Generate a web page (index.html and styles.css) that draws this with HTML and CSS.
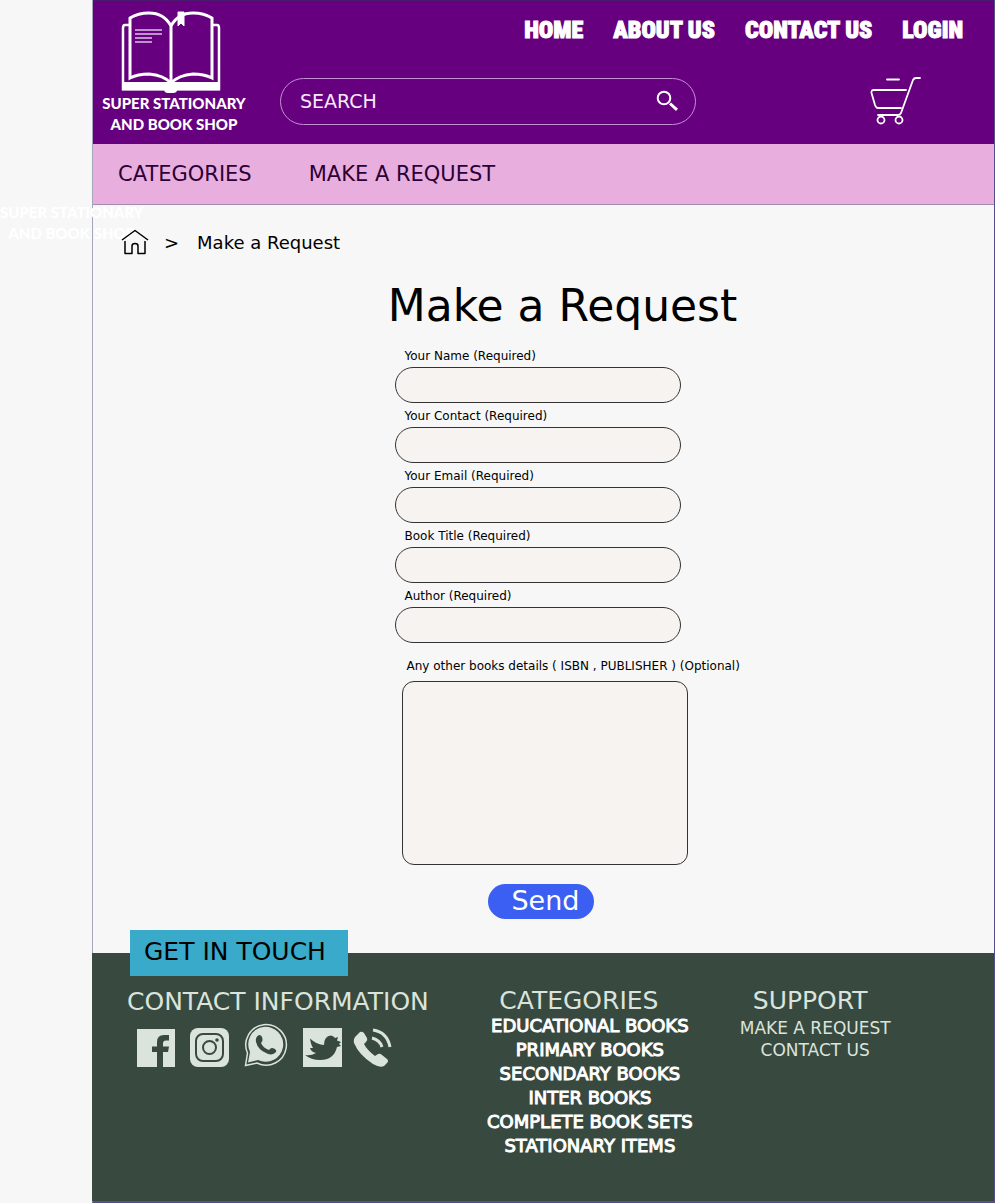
FILE: index.html
```html
<!DOCTYPE html>
<html lang="en">
<head>
<meta charset="utf-8">
<title>Make a Request</title>
<link rel="stylesheet" href="styles.css">
</head>
<body>
<div class="page">
  <header class="header">
    <a class="logo" href="#">
      <svg class="logo-mark" width="100" height="82" viewBox="0 0 100 82" fill="none" stroke="#fff" stroke-width="2" aria-hidden="true">
        <path d="M9 14H4Q2 14 2 17V78H98V17Q98 14 96 14H91" stroke-width="2.500"/>
        <path d="M2 72H98V78.500H2Z" fill="#fff"/>
        <path d="M44 78H55V79Q55 81 52 81H47Q44 81 44 78Z" fill="#fff"/>
        <path d="M50 15Q43 2 28 2Q17 2 9 7V67Q17 63 28 63Q42 64 50 72Q58 64 72 63Q83 63 91 67V7Q83 2 72 2Q57 2 50 15ZM50 14V72" stroke-width="3"/>
        <path d="M57 1H63V15L60 12L57 15Z" fill="#fff" stroke-width="1"/>
        <path d="M14 19H41M14 23H41M14 27H31M14 31H31" stroke="#dcc3e6" stroke-width="1.500"/>
      </svg>
      <span class="logo-text">SUPER STATIONARY<br>AND BOOK SHOP</span>
    </a>
    <div class="header-main">
      <nav class="top-nav" aria-label="Main">
        <a href="#">HOME</a>
        <a href="#">ABOUT US</a>
        <a href="#">CONTACT US</a>
        <a href="#">LOGIN</a>
      </nav>
      <div class="tools">
        <form class="search" role="search">
          <input class="search-input" type="search" placeholder="SEARCH" aria-label="Search">
          <button class="icon-button" type="button" aria-label="Search">
            <svg width="24" height="22" viewBox="0 0 24 22" fill="none" stroke="#fff" aria-hidden="true">
              <circle cx="9" cy="8" r="6.300" stroke-width="2"/>
              <path d="M15 13.500L22 19.800" stroke-width="3"/>
            </svg>
          </button>
        </form>
        <button class="icon-button" type="button" aria-label="Cart">
          <svg width="52" height="50" viewBox="0 0 52 50" fill="none" stroke="#fff" stroke-width="1.800" stroke-linecap="round" stroke-linejoin="round" aria-hidden="true">
            <path d="M17 3.500H29M36 14H4Q1 14 1.500 17L5 29Q6 32 8 32H31"/>
            <path d="M50 2H46Q44 2 43 4L31 37Q30 39 28 39H8"/>
            <circle cx="11" cy="44" r="3.500"/><circle cx="29" cy="44" r="3.500"/>
          </svg>
        </button>
      </div>
    </div>
  </header>

  <nav class="sub-nav" aria-label="Shop">
    <a href="#">CATEGORIES</a>
    <a href="#">MAKE A REQUEST</a>
  </nav>

  <main class="main">
    <nav class="breadcrumb" aria-label="Breadcrumb">
      <a class="home" href="#" aria-label="Home">
        <svg width="28" height="26" viewBox="0 0 28 26" fill="none" stroke="#000" stroke-width="1.500" stroke-linejoin="round" aria-hidden="true">
          <path d="M1 11L14 1.500L27 11M4 12V24.500H11V17Q11 14.500 14 14.500Q17 14.500 17 17V24.500H24V12"/>
        </svg>
      </a>
      <span>&gt;</span>
      <span class="current">Make a Request</span>
    </nav>

    <h1 class="title">Make a Request</h1>

    <form class="request">
      <label for="name">Your Name (Required)</label>
      <input id="name" type="text" required>
      <label for="contact">Your Contact (Required)</label>
      <input id="contact" type="tel" required>
      <label for="email">Your Email (Required)</label>
      <input id="email" type="email" required>
      <label for="book">Book Title (Required)</label>
      <input id="book" type="text" required>
      <label for="author">Author (Required)</label>
      <input id="author" type="text" required>
      <label class="details-label" for="details">Any other books details ( ISBN , PUBLISHER ) (Optional)</label>
      <textarea id="details"></textarea>
      <button class="send" type="submit">Send</button>
    </form>
  </main>

  <footer class="footer">
    <div class="touch">GET IN TOUCH</div>
    <div class="columns">
      <section class="contact">
        <h2>CONTACT INFORMATION</h2>
        <div class="social">
          <a href="#" aria-label="Facebook">
            <svg width="38" height="38" viewBox="0 0 38 38"><path class="light" d="M0 0H38V38H0Z"/><path class="dark" d="M20 38V23H15V17.500H20V13Q20 6 27 6H32V11.500H29Q26 11.500 26 14.500V17.500H32L31 23H26V38Z"/></svg>
          </a>
          <a href="#" aria-label="Instagram">
            <svg width="39" height="39" viewBox="0 0 39 39"><rect class="light" width="39" height="39" rx="8"/><rect class="line" x="6" y="6" width="27" height="27" rx="7"/><circle class="line" cx="19.500" cy="19.500" r="6.500"/><circle class="dark" cx="27" cy="12" r="1.800"/></svg>
          </a>
          <a class="whatsapp" href="#" aria-label="WhatsApp">
            <svg width="44" height="44" viewBox="0 0 44 44"><path class="ring" d="M1.500 42.500L3.500 30A20.300 20.300 0 1 1 13 40Z"/><path class="light" d="M4 39.500L6 29A17.500 17.500 0 1 1 14 37Z"/><path class="dark" d="M15 12Q18 12 18.500 16Q19 18 17 20Q19 25 25 27Q27 24 30 25.500Q33 27 32 29Q29 33 23 30.500Q14 27 12 19Q11 14 15 12Z"/></svg>
          </a>
          <a href="#" aria-label="Twitter">
            <svg width="39" height="39" viewBox="0 0 39 39"><path class="light" d="M0 0H39V39H0Z"/><path class="dark" d="M2 27Q8 28 13 25Q8 24 7 20H10Q8 17 7 10.500Q14 17 21 17Q21 8 28 7.500Q31 8 32 10L35 9L34 12.500L38 14L36 16L38 18L34 19Q31 32 17 32Q8 32 2 27Z"/></svg>
          </a>
          <a class="phone" href="#" aria-label="Phone">
            <svg width="40" height="40" viewBox="0 0 40 40"><path class="light" d="M3 8L7 4Q9 3 11 5L14 10Q15 12 13 14L11 16Q14 22 22 28L25 26Q27 25 29 27L34 31Q36 33 34 35L31 38Q27 40 20 36Q6 27 1 15Q0 11 3 8Z"/><path class="wave" d="M19 10Q27 12 29 19M20 2Q34 4 37 19"/></svg>
          </a>
        </div>
      </section>
      <section class="books">
        <h2>CATEGORIES</h2>
        <ul>
          <li><a href="#">EDUCATIONAL BOOKS</a></li>
          <li><a href="#">PRIMARY BOOKS</a></li>
          <li><a href="#">SECONDARY BOOKS</a></li>
          <li><a href="#">INTER BOOKS</a></li>
          <li><a href="#">COMPLETE BOOK SETS</a></li>
          <li><a href="#">STATIONARY ITEMS</a></li>
        </ul>
      </section>
      <section class="support">
        <h2>SUPPORT</h2>
        <ul>
          <li><a href="#">MAKE A REQUEST</a></li>
          <li><a href="#">CONTACT US</a></li>
        </ul>
      </section>
    </div>
  </footer>
</div>
<div class="ghost logo-text" aria-hidden="true">SUPER STATIONARY<br>AND BOOK SHOP</div>
</body>
</html>
```
FILE: styles.css
```css
* { box-sizing: border-box; }

body {
  margin: 0;
  position: relative;
  background: #f7f7f7;
  color: #000;
  font-family: Verdana, "DejaVu Sans", sans-serif;
}

a { color: inherit; text-decoration: none; }
h1, h2, ul { margin: 0; padding: 0; font-weight: 400; list-style: none; }
svg { display: block; }

.page {
  margin-left: 92px;
  border: 1px solid #55508a;
  border-width: 0 1px 2px;
  border-left-color: #a5a5bb;
}

.header {
  display: flex;
  gap: 25px;
  height: 144px;
  padding: 10px 0 0 8px;
  border-top: 1px solid #4a1a70;
  background: #66007f;
  color: #fff;
}

.logo {
  display: flex;
  flex-direction: column;
  align-items: center;
  width: 146px;
  flex: none;
}

.logo-mark { margin-right: 6px; }

.logo-text {
  font: 900 15px/21px "Britannic Bold", Lato, sans-serif;
  text-align: center;
  white-space: nowrap;
}

.header-main { flex: 1; }

.top-nav {
  display: flex;
  justify-content: flex-end;
  gap: 30px;
  padding-right: 31px;
  font: 900 24px/38px Impact, "Roboto Condensed", Roboto, sans-serif;
  -webkit-text-stroke: 1px #fff;
}

.tools {
  display: flex;
  align-items: center;
  justify-content: space-between;
  padding: 27px 72px 0 8px;
}

.search {
  display: flex;
  align-items: center;
  flex: 0 1 416px;
  height: 47px;
  padding: 0 16px 0 19px;
  border: 1px solid #c58fd6;
  border-radius: 24px;
}

.search-input {
  flex: 1;
  min-width: 0;
  padding: 0;
  border: 0;
  background: none;
  color: #fff;
  font: 19px/24px Verdana, "DejaVu Sans", sans-serif;
}

.search-input::placeholder { color: #f6e9fb; opacity: 1; }
.icon-button { padding: 0; border: 0; background: none; }

.sub-nav {
  display: flex;
  align-items: center;
  gap: 57px;
  height: 61px;
  padding: 0 25px;
  border-bottom: 1px solid #a58bb0;
  background: #e8afde;
  color: #2b0038;
  font-size: 21px;
}

.main { padding: 20px 0 34px; }

.breadcrumb {
  position: relative;
  z-index: 1;
  display: flex;
  align-items: center;
  height: 34px;
  padding-left: 28px;
  gap: 15px;
  font-size: 18px;
}

.current { margin-left: 3px; }

.title {
  margin-top: 17px;
  padding-left: 38px;
  font-size: 44px;
  line-height: 60px;
  text-align: center;
}

.request {
  display: flex;
  flex-direction: column;
  width: 300px;
  margin: 7px auto 0;
}

.request label {
  padding: 2px 0 0 11px;
  font-size: 12px;
  line-height: 22px;
  white-space: nowrap;
}

.request input,
.request textarea {
  width: 286px;
  margin: 0 0 0 1px;
  padding: 8px 16px;
  border: 1px solid #333;
  background: #f7f3f0;
  font: 16px "DejaVu Sans", sans-serif;
}

.request input { height: 36px; border-radius: 18px; }
.request .details-label { padding: 12px 0 4px 13px; }

.request textarea {
  height: 184px;
  margin-left: 8px;
  border-radius: 12px;
  resize: none;
}

.send {
  align-self: center;
  width: 106px;
  height: 35px;
  margin: 19px 6px 0 0;
  padding: 0 12px 2px 22px;
  border: 0;
  border-radius: 18px;
  background: #3b5ff2;
  color: #fff;
  font: 27px/32px Verdana, "DejaVu Sans", sans-serif;
}

.footer {
  display: flex;
  flex-direction: column;
  min-height: 248px;
  margin-left: -1px;
  padding: 0 32px 40px 35px;
  background: #38493f;
  color: #dbe4dc;
}

.touch {
  width: 218px;
  margin: -23px 0 0 3px;
  padding: 0 0 2px 14px;
  background: #39aac9;
  color: #000;
  font-size: 25px;
  line-height: 44px;
}

.columns { display: flex; gap: 47px; padding-top: 9px; }
.footer h2 { font-size: 25px; line-height: 32px; white-space: nowrap; }

.contact { width: 313px; padding-top: 1px; }

.social {
  display: flex;
  align-items: center;
  gap: 15px;
  padding: 5px 0 0 10px;
}

.whatsapp { margin-bottom: 5px; }
.phone { margin-left: -4px; }

.light { fill: #dbe4dc; }
.dark { fill: #38493f; }
.line { fill: none; stroke: #38493f; stroke-width: 2; }
.ring { fill: none; stroke: #dbe4dc; stroke-width: 1.5; }
.wave { fill: none; stroke: #dbe4dc; stroke-width: 3; }

.books,
.support { text-align: center; white-space: nowrap; }

.books h2 { padding-right: 22px; }

.books ul {
  margin-top: -3px;
  color: #fff;
  font-size: 18px;
  line-height: 24px;
  -webkit-text-stroke: 1px #fff;
}

.support h2 { padding-right: 10px; }
.support ul { font-size: 17px; line-height: 22px; }

.ghost {
  position: absolute;
  left: 0;
  top: 202px;
  color: #fff;
}
```
